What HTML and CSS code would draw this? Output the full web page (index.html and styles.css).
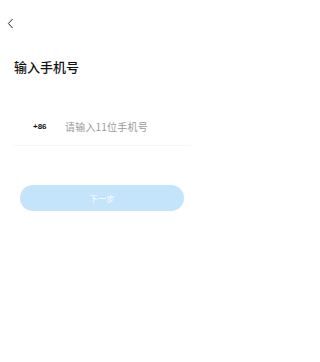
FILE: index.html
```html
<!DOCTYPE html>
<html lang="zh">
<head>
<meta charset="utf-8">
<link rel="stylesheet" href="styles.css">
</head>
<body>
<div class="page">
  <div class="nav">
    <svg class="back" width="7" height="11" viewBox="0 0 7 11"><path d="M5.6 1 L1.4 5.5 L5.6 10" fill="none" stroke="#222" stroke-width="1"/></svg>
  </div>
  <h1 class="title">输入手机号</h1>
  <div class="phone-row">
    <span class="code">+86</span>
    <span class="placeholder">请输入11位手机号</span>
  </div>
  <div class="divider"></div>
  <button class="next">下一步</button>
</div>
</body>
</html>
```
FILE: styles.css
```css
html, body { margin: 0; padding: 0; background: #fff; }
body { font-family: "Noto Sans CJK SC", "Noto Sans", sans-serif; width: 204px; height: 362px; overflow: hidden; }
.page { display: flex; flex-direction: column; }
.nav { height: 16px; padding: 18px 0 0 7px; }
.back { display: block; }
.title { margin: 23px 0 0 14px; font-size: 13px; font-weight: 500; line-height: 19px; color: #111; }
.phone-row { display: flex; align-items: center; margin-top: 43px; padding-left: 33px; height: 14px; }
.code { font-family: "Liberation Sans", Arial, sans-serif; font-size: 8px; font-weight: bold; color: #111; width: 32px; }
.placeholder { font-size: 10px; color: #9a9a9a; letter-spacing: 0.2px; }
.divider { margin: 12px 13px 0 13px; height: 1px; background: #f6f6f6; }
.next { margin: 39px 20px 0 20px; height: 26px; border: none; border-radius: 13px; background: #c4e4fb; color: #fff; font-family: "Noto Sans CJK SC", sans-serif; font-size: 8.5px; padding: 0; }
```
